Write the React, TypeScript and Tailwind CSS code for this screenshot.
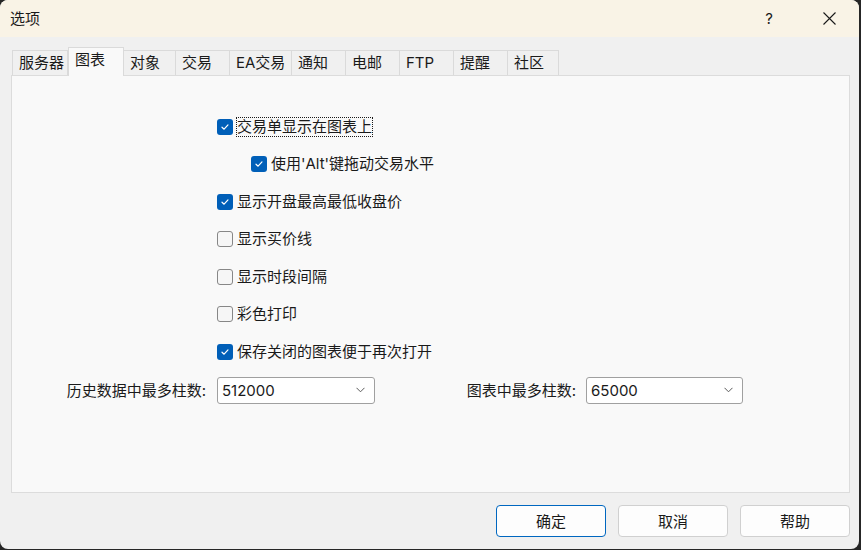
import React from "react";

const tabs = [
  { label: "服务器", w: "w-[56px]" },
  { label: "图表", w: "w-[56px]", active: true },
  { label: "对象", w: "w-[52px]" },
  { label: "交易", w: "w-[54px]" },
  { label: "EA交易", w: "w-[62px]" },
  { label: "通知", w: "w-[54px]" },
  { label: "电邮", w: "w-[54px]" },
  { label: "FTP", w: "w-[54px]" },
  { label: "提醒", w: "w-[54px]" },
  { label: "社区", w: "w-[51px]" },
];

const options = [
  { label: "交易单显示在图表上", checked: true, focus: true },
  { label: "使用'Alt'键拖动交易水平", checked: true, indent: true },
  { label: "显示开盘最高最低收盘价", checked: true },
  { label: "显示买价线", checked: false },
  { label: "显示时段间隔", checked: false },
  { label: "彩色打印", checked: false },
  { label: "保存关闭的图表便于再次打开", checked: true },
];

function CheckBox({ checked }: { checked: boolean }) {
  if (checked) {
    return (
      <span className="flex h-[16px] w-[16px] shrink-0 items-center justify-center rounded-[3px] bg-[#005fb8]">
        <svg width="10" height="10" viewBox="0 0 10 10" fill="none">
          <path d="M2 5.2 L4.1 7.2 L8 2.9" stroke="white" strokeWidth="1.2" strokeLinecap="round" strokeLinejoin="round" />
        </svg>
      </span>
    );
  }
  return <span className="h-[16px] w-[16px] shrink-0 rounded-[3px] border border-[#878787] bg-[#f6f6f6]" />;
}

function Combo({ value, w }: { value: string; w: string }) {
  return (
    <div className={`flex h-[27px] ${w} items-center justify-between rounded-[3px] border border-[#a0a0a0] bg-white pl-[4px] pr-[9px]`}>
      <span className="text-[15px] leading-none text-[#1a1a1a]">{value}</span>
      <svg width="9" height="6" viewBox="0 0 9 6" fill="none">
        <path d="M0.5 0.8 L4.5 4.8 L8.5 0.8" stroke="#5a5a5a" strokeWidth="1" />
      </svg>
    </div>
  );
}

export default function App() {
  return (
    <div className="h-[550px] w-[861px] bg-[#262626] font-['Inter','Noto_Sans_CJK_SC',sans-serif] text-[#1a1a1a]">
      <div className="flex h-[549px] w-[859px] flex-col overflow-hidden rounded-t-[8px] rounded-b-[8px] bg-[#f0f0f0]">
        {/* title bar */}
        <div className="flex h-[37px] shrink-0 items-center bg-[#f9f3e6]">
          <span className="ml-[10px] text-[15px] leading-none">选项</span>
          <span className="ml-auto mr-[50px] text-[15px] leading-none">?</span>
          <svg className="mr-[23px]" width="13" height="13" viewBox="0 0 13 13" fill="none">
            <path d="M0.5 0.5 L12.5 12.5 M12.5 0.5 L0.5 12.5" stroke="#1a1a1a" strokeWidth="1.1" />
          </svg>
        </div>

        {/* tabs */}
        <div className="ml-[12px] mt-[11px] flex h-[27px] items-end">
          {tabs.map((t) =>
            t.active ? (
              <div
                key={t.label}
                className={`relative z-10 -mb-px flex h-[29px] ${t.w} items-start border border-b-0 border-[#dadada] bg-[#f9f9f9] pl-[6px] pt-[3px] text-[15px] leading-[18px]`}
              >
                {t.label}
              </div>
            ) : (
              <div
                key={t.label}
                className={`flex h-[25px] ${t.w} items-center border border-b-0 border-l-0 border-[#dadada] bg-[#f0f0f0] pl-[6px] text-[15px] leading-[18px] first:border-l`}
              >
                {t.label}
              </div>
            )
          )}
        </div>

        {/* panel */}
        <div className="ml-[11px] h-[418px] w-[839px] border border-[#dcdcdc] bg-[#f9f9f9]">
          <div className="flex flex-col pt-[32px]">
            {options.map((o) => (
              <div
                key={o.label}
                className={`flex h-[37.5px] items-center gap-[4px] ${o.indent ? "pl-[239px]" : "pl-[205px]"}`}
              >
                <CheckBox checked={o.checked} />
                <span
                  className={`text-[15px] leading-[18px] ${o.focus ? "outline outline-1 outline-dotted outline-[#1a1a1a]" : ""}`}
                >
                  {o.label}
                </span>
              </div>
            ))}
          </div>

          <div className="mt-[6px] flex items-center">
            <span className="w-[194px] text-right text-[15px] leading-none">历史数据中最多柱数:</span>
            <div className="ml-[11px]">
              <Combo value="512000" w="w-[158px]" />
            </div>
            <span className="w-[201px] text-right text-[15px] leading-none">图表中最多柱数:</span>
            <div className="ml-[10px]">
              <Combo value="65000" w="w-[157px]" />
            </div>
          </div>
        </div>

        {/* buttons */}
        <div className="mt-[12px] flex justify-end gap-[12px] pr-[9px]">
          <button className="h-[32px] w-[110px] rounded-[4px] border border-[#0067c0] bg-[#fdfdfd] text-[15px] leading-none">
            确定
          </button>
          <button className="h-[32px] w-[110px] rounded-[4px] border border-[#d0d0d0] bg-[#fdfdfd] text-[15px] leading-none">
            取消
          </button>
          <button className="h-[32px] w-[110px] rounded-[4px] border border-[#d0d0d0] bg-[#fdfdfd] text-[15px] leading-none">
            帮助
          </button>
        </div>
      </div>
    </div>
  );
}
